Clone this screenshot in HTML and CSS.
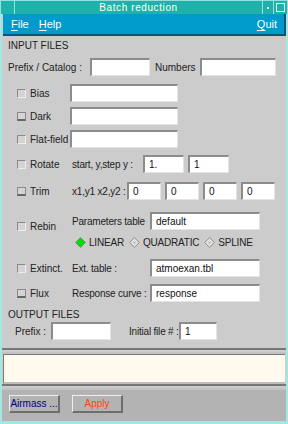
FILE: index.html
```html
<!DOCTYPE html>
<html>
<head>
<meta charset="utf-8">
<link rel="stylesheet" href="styles.css">
</head>
<body>
<div class="titlebar">
  <div class="tb-menu"></div>
  <div class="tb-title">Batch reduction</div>
  <div class="tb-min"><span class="dot"></span></div>
  <div class="tb-max"><span class="sq"></span></div>
</div>
<div class="body">
  <div class="menubar">
    <span class="mi"><u>F</u>ile</span>
    <span class="mi"><u>H</u>elp</span>
    <span class="mi quit"><u>Q</u>uit</span>
  </div>
  <div class="form">
    <div class="section t-in">INPUT FILES</div>
    <div class="row r-prefix">
      <span class="lbl-prefix">Prefix / Catalog :</span>
      <span class="input w60"></span>
      <span class="lbl-num">Numbers</span>
      <span class="input w76"></span>
    </div>
    <div class="row r-bias">
      <span class="cb"></span><span class="clabel">Bias</span>
      <span class="input w108"></span>
    </div>
    <div class="row r-dark">
      <span class="cb dk"></span><span class="clabel">Dark</span>
      <span class="input w108"></span>
    </div>
    <div class="row r-flat">
      <span class="cb"></span><span class="clabel">Flat-field</span>
      <span class="input w108"></span>
    </div>
    <div class="row r-rot">
      <span class="cb"></span><span class="clabel">Rotate</span>
      <span class="plabel w73">start, y,step y :</span>
      <span class="input w41">1.</span>
      <span class="input w41">1</span>
    </div>
    <div class="row r-trim">
      <span class="cb dk"></span><span class="clabel">Trim</span>
      <span class="plabel w57">x1,y1 x2,y2 :</span>
      <span class="input w34">0</span>
      <span class="input w34">0</span>
      <span class="input w34">0</span>
      <span class="input w34">0</span>
    </div>
    <div class="block r-rebin">
      <div class="row left"><span class="cb"></span><span class="clabel">Rebin</span></div>
      <div class="blockcol">
        <div class="row">
          <span class="plabel w80">Parameters table</span>
          <span class="input w110">default</span>
        </div>
        <div class="radios">
          <span class="radio"><svg width="11" height="11" viewBox="0 0 11 11"><path d="M5.5 0.5 L10.5 5.5 L5.5 10.5 L0.5 5.5 Z" fill="#00e000" stroke="#888" stroke-width="1"/></svg>LINEAR</span>
          <span class="radio"><svg width="11" height="11" viewBox="0 0 11 11"><path d="M5.5 0.5 L10.5 5.5 L5.5 10.5 L0.5 5.5 Z" fill="#ccc" stroke="#999" stroke-width="1"/><path d="M5.5 2.5 L8.5 5.5 L5.5 8.5 L2.5 5.5 Z" fill="none" stroke="#eee" stroke-width="1"/></svg>QUADRATIC</span>
          <span class="radio"><svg width="11" height="11" viewBox="0 0 11 11"><path d="M5.5 0.5 L10.5 5.5 L5.5 10.5 L0.5 5.5 Z" fill="#ccc" stroke="#999" stroke-width="1"/><path d="M5.5 2.5 L8.5 5.5 L5.5 8.5 L2.5 5.5 Z" fill="none" stroke="#eee" stroke-width="1"/></svg>SPLINE</span>
        </div>
      </div>
    </div>
    <div class="row r-ext">
      <span class="cb"></span><span class="clabel">Extinct.</span>
      <span class="plabel w80">Ext. table :</span>
      <span class="input w110">atmoexan.tbl</span>
    </div>
    <div class="row r-flux">
      <span class="cb dk"></span><span class="clabel">Flux</span>
      <span class="plabel w80">Response curve :</span>
      <span class="input w110">response</span>
    </div>
    <div class="section t-out">OUTPUT FILES</div>
    <div class="row r-out">
      <span class="lbl-oprefix">Prefix :</span>
      <span class="input w60"></span>
      <span class="lbl-init">Initial file # :</span>
      <span class="input w38">1</span>
    </div>
  </div>
  <div class="sep"></div>
  <div class="message"></div>
  <div class="sep"></div>
  <div class="buttons">
    <button class="btn airmass">Airmass ...</button>
    <button class="btn apply">Apply</button>
  </div>
</div>
</body>
</html>
```
FILE: styles.css
```css
* { box-sizing: border-box; margin: 0; padding: 0; }
html, body { width: 288px; height: 424px; overflow: hidden; }
body {
  font-family: "Liberation Sans", Arial, sans-serif;
  font-size: 10px;
  color: #222;
  background: #20b2aa;
}
.titlebar {
  height: 14px;
  display: flex;
  background: #20b2aa;
  border: 1px solid #8fe3dc;
  border-bottom: none;
}
.tb-menu { width: 14px; border-right: 1px solid #8fe3dc; }
.tb-title {
  flex: 1;
  color: #fff;
  text-align: center;
  line-height: 13px;
  font-size: 10px;
  letter-spacing: 0.6px;
}
.tb-min {
  width: 12px;
  border-left: 1px solid #8fe3dc;
  border-right: 1px solid #8fe3dc;
  display: flex; align-items: center; justify-content: center;
}
.tb-min .dot { width: 2px; height: 2px; background: #fff; }
.tb-max { width: 13px; display: flex; align-items: center; justify-content: center; }
.tb-max .sq { width: 9px; height: 9px; border: 1px solid #e8fffc; }

.body {
  height: 410px;
  display: flex;
  flex-direction: column;
  background: #cccccc;
  border-left: 2px solid #a4e6e0;
  border-right: 2px solid #a4e6e0;
  border-bottom: 3px solid #a4e6e0;
}
.menubar {
  height: 22px;
  margin-left: 1px;
  background: #009acb;
  border-right: 2px solid #03577a;
  border-bottom: 2px solid #03577a;
  display: flex;
  align-items: center;
  color: #fff;
  font-size: 11px;
  padding-left: 8px;
}
.mi { margin-right: 10px; }
.mi u { text-decoration-thickness: 1px; text-underline-offset: 2px; }
.mi.quit { margin-left: auto; margin-right: 7px; }

.form { height: 312px; padding-top: 4px; display: flex; flex-direction: column; }
.section { height: 12px; line-height: 12px; padding-left: 6px; }
.t-out { margin-top: 7px; }
.row { display: flex; align-items: center; height: 18px; flex: none; white-space: nowrap; }
.r-prefix { margin-top: 6px; padding-left: 6px; }
.r-bias { margin-top: 8px; }
.r-dark, .r-flat { margin-top: 5px; }
.r-rot { margin-top: 7px; }
.r-trim { margin-top: 9px; }
.r-rebin { margin-top: 12px; }
.r-ext { margin-top: 10px; }
.r-flux { margin-top: 7px; }
.r-out { margin-top: 1px; padding-left: 13px; }

.cb {
  width: 9px; height: 9px;
  margin-left: 15px;
  border: 1px solid #8a8a8a;
  border-right-color: #eee;
  border-bottom-color: #eee;
  background: #d4d4d4;
  flex: none;
}
.cb.dk { border-bottom: 2px solid #666; border-right-color: #888; }
.clabel { width: 40px; margin-left: 4px; white-space: nowrap; overflow: hidden; flex: none; }
.plabel { padding-left: 2px; white-space: nowrap; flex: none; letter-spacing: -0.2px; }
.w73 { width: 73px; }
.w57 { width: 57px; }
.w80 { width: 80px; }

.input {
  height: 18px;
  background: #fff;
  border-top: 2px solid #8c8c8c;
  border-left: 2px solid #8c8c8c;
  border-right: 1px solid #e4e4e4;
  border-bottom: 1px solid #e4e4e4;
  padding-left: 4px;
  line-height: 15px;
  color: #111;
  flex: none;
}
.w60 { width: 60px; }
.w76 { width: 76px; }
.w108 { width: 108px; }
.w41 { width: 41px; margin-right: 4px; }
.w34 { width: 34px; margin-right: 4px; }
.w110 { width: 110px; }
.w38 { width: 38px; }
.lbl-prefix { width: 82px; }
.lbl-num { width: 45px; margin-left: 5px; }
.lbl-oprefix { width: 36px; }
.lbl-init { width: 50px; margin-left: 18px; letter-spacing: -0.2px; }

.block { display: flex; flex: none; }
.block .left { margin-top: 5px; align-self: flex-start; }
.blockcol { display: flex; flex-direction: column; }
.radios {
  display: flex; align-items: center;
  height: 14px; margin-top: 5px;
  padding-left: 5px;
  white-space: nowrap;
  letter-spacing: -0.2px;
}
.radio { display: flex; align-items: center; margin-right: 5px; }
.radio svg { margin-right: 3px; }

.sep {
  height: 6px;
  flex: none;
  border-top: 2px solid #777;
  border-bottom: 2px solid #c2c2c2;
  background: #ccc;
}
.message {
  height: 30px;
  flex: none;
  margin: 0 1px;
  background: #fff9ee;
  border-top: 1px solid #7a7a7a;
  border-left: 1px solid #7a7a7a;
  border-bottom: 2px solid #bdbdbd;
}
.buttons {
  flex: 1;
  background: #b3b3b3;
  display: flex;
  align-items: flex-start;
  padding: 5px 0 0 7px;
}
.btn {
  height: 18px;
  width: 51px;
  background: #b3b3b3;
  border: 1px solid #eee;
  border-right: 2px solid #6e6e6e;
  border-bottom: 2px solid #6e6e6e;
  font-family: "Liberation Sans", Arial, sans-serif;
  font-size: 10px;
  padding: 0;
  margin-right: 12px;
}
.airmass { color: #000088; }
.apply { color: #ff4500; }
```
